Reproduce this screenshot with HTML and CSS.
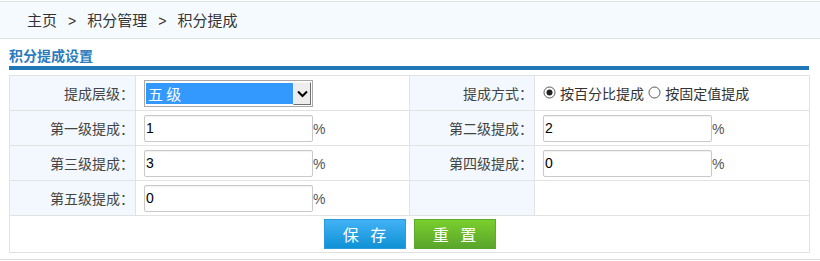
FILE: index.html
```html
<!DOCTYPE html>
<html lang="zh-CN">
<head>
<meta charset="utf-8">
<title>积分提成设置</title>
<link rel="stylesheet" href="styles.css">
</head>
<body>
<div class="crumb">
  <span>主页</span><span class="sep">&gt;</span><span>积分管理</span><span class="sep">&gt;</span><span>积分提成</span>
</div>
<div class="content">
  <div class="title">积分提成设置</div>
  <div class="bar"></div>
  <table class="form">
    <colgroup><col class="c1"><col class="c2"><col class="c3"><col class="c4"></colgroup>
    <tr>
      <td class="lbl">提成层级<span class="colon">：</span></td>
      <td class="val">
        <div class="select"><span class="sel-text">五 级</span><span class="sel-arrow"><svg width="11" height="8" viewBox="0 0 11 8"><path d="M1 1.5 L5.5 6 L10 1.5" fill="none" stroke="#000" stroke-width="2"/></svg></span></div>
      </td>
      <td class="lbl">提成方式<span class="colon">：</span></td>
      <td class="val">
        <span class="radio"><svg width="13" height="13" viewBox="0 0 13 13"><circle cx="6.5" cy="6.5" r="5.5" fill="#fff" stroke="#555" stroke-width="1"/><circle cx="6.5" cy="6.5" r="3" fill="#222"/></svg>按百分比提成</span>
        <span class="radio"><svg width="13" height="13" viewBox="0 0 13 13"><circle cx="6.5" cy="6.5" r="5.5" fill="#fff" stroke="#555" stroke-width="1"/></svg>按固定值提成</span>
      </td>
    </tr>
    <tr>
      <td class="lbl">第一级提成<span class="colon">：</span></td>
      <td class="val"><span class="inp">1</span><span class="pct">%</span></td>
      <td class="lbl">第二级提成<span class="colon">：</span></td>
      <td class="val"><span class="inp">2</span><span class="pct">%</span></td>
    </tr>
    <tr>
      <td class="lbl">第三级提成<span class="colon">：</span></td>
      <td class="val"><span class="inp">3</span><span class="pct">%</span></td>
      <td class="lbl">第四级提成<span class="colon">：</span></td>
      <td class="val"><span class="inp">0</span><span class="pct">%</span></td>
    </tr>
    <tr>
      <td class="lbl">第五级提成<span class="colon">：</span></td>
      <td class="val"><span class="inp">0</span><span class="pct">%</span></td>
      <td class="lbl"></td>
      <td class="val"></td>
    </tr>
    <tr>
      <td class="btns" colspan="4"><span class="btn save">保 存</span><span class="btn reset">重 置</span></td>
    </tr>
  </table>
</div>
</body>
</html>
```
FILE: styles.css
```css
html, body {
  margin: 0;
  padding: 0;
  background: #fff;
  font-family: "Noto Sans CJK SC", "Liberation Sans", sans-serif;
}
.crumb {
  margin-top: 1px;
  height: 36px;
  line-height: 36px;
  border-top: 1px solid #dde2e6;
  border-bottom: 1px solid #dde2e6;
  background: #f5faff;
  padding-left: 27px;
  font-size: 15px;
  color: #333;
}
.crumb .sep {
  margin: 0 11px;
  font-family: "Liberation Sans", sans-serif;
  font-size: 14px;
}
.content {
  padding: 0 11px 6px 9px;
  border-bottom: 1px solid #dcdcdc;
}
.title {
  padding-top: 6px;
  padding-bottom: 1px;
  line-height: 20px;
  font-size: 14px;
  font-weight: bold;
  color: #2b7bbd;
}
.bar {
  height: 4px;
  background: #1f78b5;
  margin-bottom: 5px;
}
.form {
  width: 800px;
  table-layout: fixed;
  border-collapse: collapse;
  border: 1px solid #e2e2e2;
}
.c1 { width: 126px; }
.c2 { width: 274px; }
.c3 { width: 125px; }
.c4 { width: 275px; }
.form td {
  border: 1px solid #e2e2e2;
  height: 34px;
  padding: 0;
  font-size: 14px;
  vertical-align: middle;
}
.form td.lbl {
  background: #f2f8fd;
  text-align: right;
  padding-right: 1px;
  color: #444;
}
.colon {
  font-family: "Noto Sans CJK JP", "Noto Sans CJK SC", sans-serif;
}
.form td.val {
  padding-left: 8px;
  background: #fff;
}
.select {
  display: flex;
  width: 165px;
  height: 23px;
  border: 1px solid #a9a9a9;
  background: #fff;
  padding: 1px;
  box-sizing: content-box;
  margin-top: 1px;
}
.sel-text {
  flex: 1;
  background: #3399ff;
  color: #fff;
  font-size: 15px;
  line-height: 21px;
  padding-left: 2px;
  margin: 1px 0;
}
.sel-arrow {
  width: 18px;
  display: flex;
  align-items: center;
  justify-content: center;
  background: #ededed;
  border: 1px solid #f8f8f8;
  border-right-color: #707070;
  border-bottom-color: #707070;
  box-sizing: border-box;
}
.radio {
  display: inline-flex;
  align-items: center;
  color: #333;
  font-size: 14px;
  margin-right: 1px;
}
.radio svg {
  margin-right: 4px;
}
.inp {
  display: inline-block;
  vertical-align: middle;
  width: 166px;
  height: 25px;
  line-height: 25px;
  border: 1px solid #c9c9c9;
  border-radius: 2px;
  box-shadow: inset 0 1px 1px rgba(0,0,0,0.06);
  font-family: "Liberation Sans", sans-serif;
  font-size: 14px;
  color: #000;
  padding-left: 1px;
  box-sizing: content-box;
}
.pct {
  vertical-align: middle;
  font-family: "Liberation Sans", sans-serif;
  font-size: 14px;
  color: #555;
}
.form td.btns {
  height: 36px;
  text-align: center;
  background: #fff;
}
.btn {
  display: inline-block;
  vertical-align: middle;
  width: 80px;
  height: 28px;
  line-height: 28px;
  font-size: 16px;
  color: #fff;
  word-spacing: 8px;
  margin: 0 4px;
}
.save {
  background: linear-gradient(#42b2f6, #0f91d5);
  border: 1px solid #2b9bdc;
}
.reset {
  background: linear-gradient(#7ace2d, #5aa52b);
  border: 1px solid #5fa82f;
}
```
